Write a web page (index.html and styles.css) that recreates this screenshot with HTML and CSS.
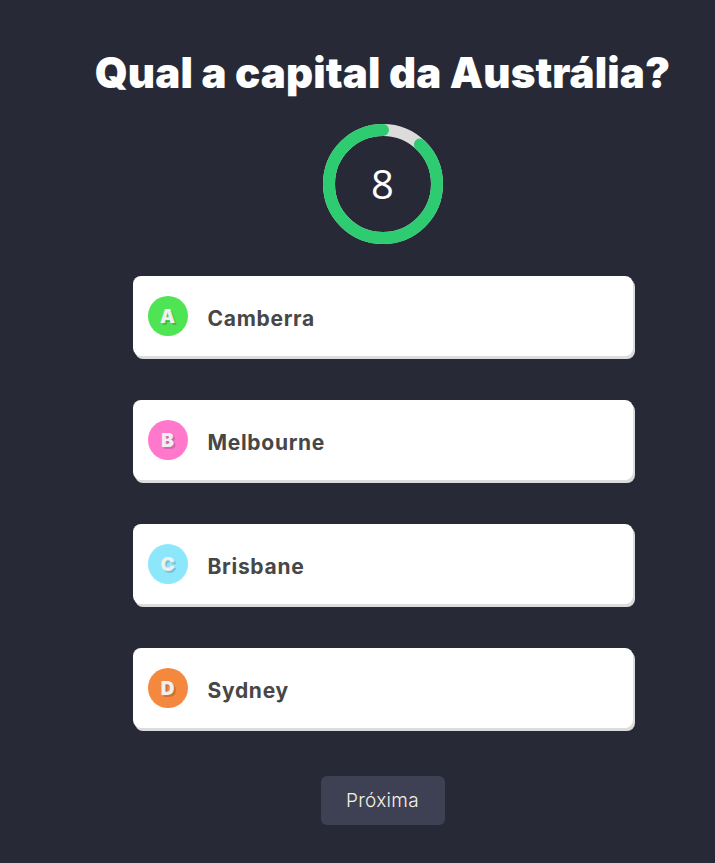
FILE: index.html
```html
<!DOCTYPE html>
<html lang="pt">
<head>
<meta charset="utf-8">
<title>Quiz</title>
<link rel="stylesheet" href="styles.css">
</head>
<body>
<main class="quiz">
  <h1 class="question">Qual a capital da Austrália?</h1>
  <div class="timer">
    <svg class="timer-ring" width="120" height="120" viewBox="0 0 120 120">
      <circle class="track" cx="60" cy="60" r="54"></circle>
      <circle class="progress" cx="60" cy="60" r="54" transform="rotate(-90 60 60)"></circle>
    </svg>
    <span class="timer-value">8</span>
  </div>
  <ul class="options">
    <li class="option"><span class="badge badge-a">A</span><span class="label">Camberra</span></li>
    <li class="option"><span class="badge badge-b">B</span><span class="label">Melbourne</span></li>
    <li class="option"><span class="badge badge-c">C</span><span class="label">Brisbane</span></li>
    <li class="option"><span class="badge badge-d">D</span><span class="label">Sydney</span></li>
  </ul>
  <button class="next" type="button">Próxima</button>
</main>
</body>
</html>
```
FILE: styles.css
```css
* { box-sizing: border-box; }
html, body { margin: 0; }
body {
  background: #272a36;
  padding-left: 50px;
  font-family: "Inter", "Open Sans", sans-serif;
  min-height: 863px;
}
.quiz {
  display: flex;
  flex-direction: column;
  align-items: center;
  padding-top: 45px;
}
.question {
  margin: 0;
  color: #ffffff;
  font-family: "Inter", sans-serif;
  font-weight: 900;
  font-size: 42px;
  line-height: 56px;
  letter-spacing: 0.1px;
  white-space: nowrap;
}
.timer {
  position: relative;
  width: 120px;
  height: 120px;
  margin-top: 23px;
  display: flex;
  align-items: center;
  justify-content: center;
}
.timer-ring { position: absolute; left: 0; top: 0; }
.track { fill: none; stroke: #dcdcdc; stroke-width: 12; }
.progress {
  fill: none;
  stroke: #2ecc71;
  stroke-width: 12;
  stroke-linecap: round;
  stroke-dasharray: 298.8 339.3;
  stroke-dashoffset: -40.5;
}
.timer-value {
  position: relative;
  color: #ffffff;
  font-family: "Open Sans", sans-serif;
  font-weight: 400;
  font-size: 40px;
  line-height: 1;
}
.options {
  list-style: none;
  margin: 32px 0 0;
  padding: 0;
  width: 500px;
  display: flex;
  flex-direction: column;
  gap: 44px;
}
.option {
  height: 80px;
  background: #ffffff;
  border-radius: 8px;
  box-shadow: 2px 3px 0 #dcdcdc;
  display: flex;
  align-items: center;
  padding-left: 15px;
  gap: 20px;
}
.badge {
  width: 40px;
  height: 40px;
  border-radius: 50%;
  display: flex;
  align-items: center;
  justify-content: center;
  color: #efefef;
  font-weight: 900;
  font-size: 19px;
  padding-top: 1px;
  text-shadow: 2px 2px 0 rgba(0, 0, 0, 0.16);
}
.badge-a { background: #4ee454; }
.badge-b { background: #ff78cb; }
.badge-c { background: #8ce7fb; }
.badge-d { background: #f4883e; }
.label {
  color: #474747;
  font-weight: 700;
  font-size: 21px;
  letter-spacing: 0.7px;
  padding-top: 4px;
}
.next {
  margin-top: 48px;
  width: 124px;
  height: 49px;
  border: 0;
  border-radius: 6px;
  background: #3e4053;
  color: #f4f1e4;
  font-family: "Inter", sans-serif;
  font-weight: 300;
  font-size: 19px;
  letter-spacing: 0.3px;
  cursor: pointer;
}
```
